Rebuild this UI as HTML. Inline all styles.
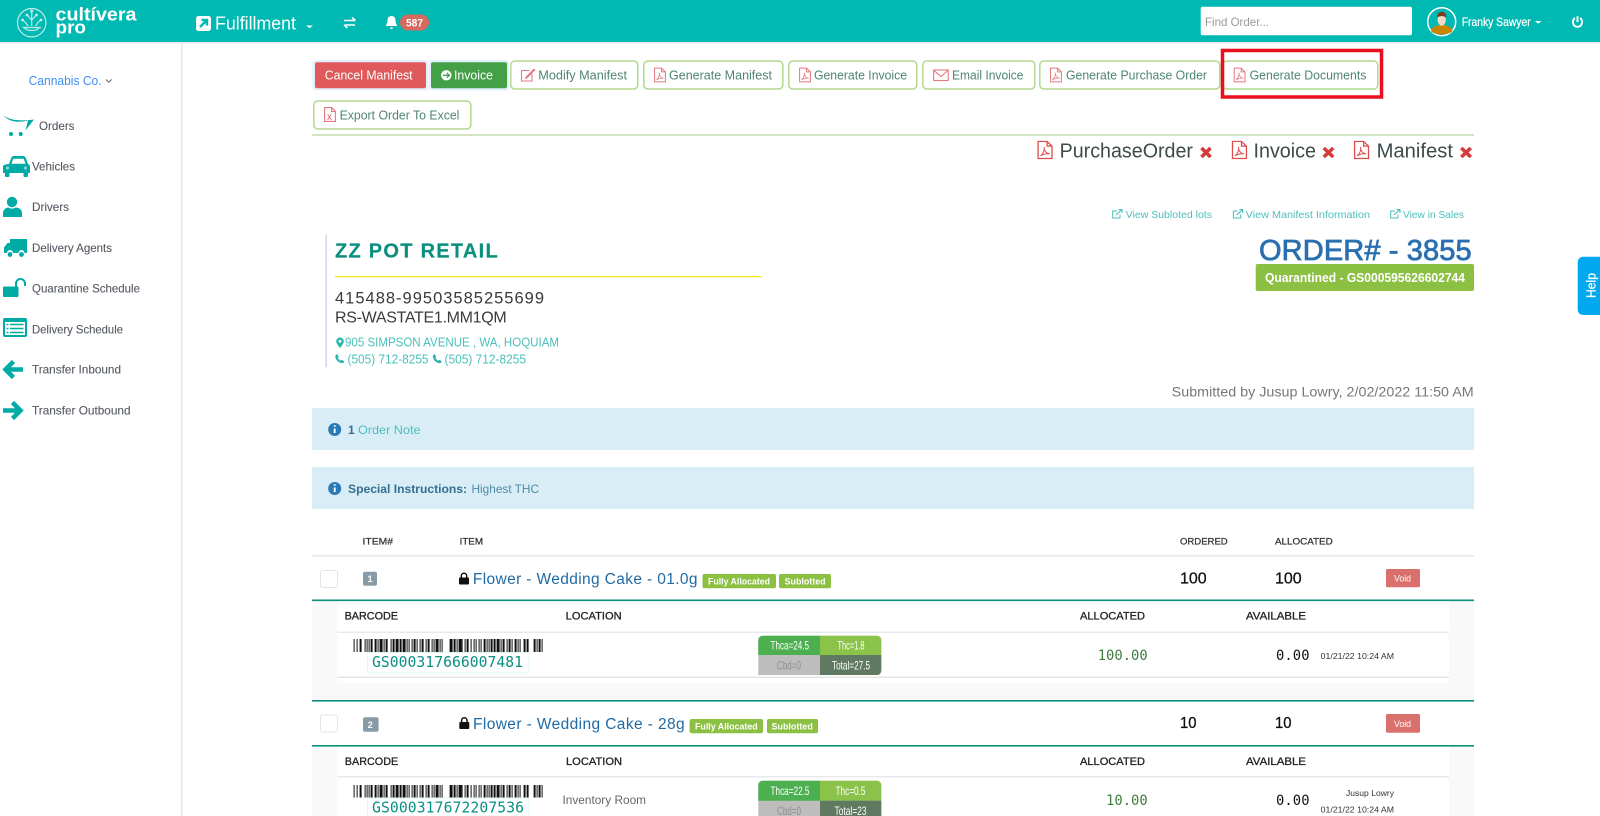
<!DOCTYPE html>
<html lang="en">
<head>
<meta charset="utf-8">
<title>Order 3855 - Fulfillment</title>
<style>
html,body{margin:0;padding:0;background:#fff;width:1600px;height:816px;overflow:hidden}
svg{display:block}
text{font-family:"Liberation Sans",Arial,sans-serif}
.m{font-family:"DejaVu Sans Mono","Liberation Mono",monospace}
.btn{font-size:12.5px;fill:#4f8571}
.nav{font-size:12px;fill:#565b63;stroke:#565b63;stroke-width:.12px}
.th{font-size:9.5px;fill:#333;stroke:#333;stroke-width:.25px}
.sh{font-size:11px;fill:#222;stroke:#222;stroke-width:.3px}
.lb{font-size:9.5px;fill:#fff;font-weight:bold}
.ti{font-size:15.5px;fill:#1f6aa5}
.qt{font-size:15.5px;fill:#111;stroke:#111;stroke-width:.3px}
.gr{font-size:12px;fill:#fff}
.gy{font-size:12px;fill:#8f8f8f}
.lk{font-size:10.5px;fill:#4bbfbb}
.ad{font-size:12.5px;fill:#4bbfbb}
.doc{font-size:20px;fill:#3d4b4b}
.ico{fill:none;stroke:#e6777c;stroke-width:1.1}
.tl{fill:#00aaa5}
</style>
</head>
<body>
<svg xmlns="http://www.w3.org/2000/svg" width="1600" height="816" viewBox="0 0 1600 816">
<defs>
<symbol id="pdf" viewBox="0 0 12 15" preserveAspectRatio="none" overflow="visible">
<path d="M.6.6H7.6L11.4 4.4V14.4H.6Z M7.6.6V4.4H11.4" fill="none" stroke="currentColor" stroke-width="1"/>
<path d="M2.5 12.3C4.500 10.800 5.800 7.800 5.300 5.200C5 7.800 7 10.400 9.600 10.700C7.400 10.400 4.600 11 2.500 12.300Z" fill="none" stroke="currentColor" stroke-width=".8"/>
</symbol>
<symbol id="bars" viewBox="0 0 190 13" preserveAspectRatio="none" overflow="visible">
<path stroke="#111" stroke-width="1" d="M.5 0v13M3.5 0v13M11.5 0v13M13.5 0v13M15.5 0v13M24.5 0v13M30.5 0v13M37.5 0v13M53.5 0v13M55.5 0v13M58.5 0v13M63.5 0v13M66.5 0v13M72.5 0v13M78.5 0v13M80.5 0v13M86.5 0v13M88.5 0v13M103.5 0v13M108.5 0v13M111.5 0v13M117.5 0v13M120.5 0v13M122.5 0v13M125.5 0v13M127.5 0v13M133.5 0v13M135.5 0v13M147.5 0v13M153.5 0v13M158.5 0v13M164.5 0v13M166.5 0v13M183.5 0v13M188.5 0v13"/>
<path stroke="#111" stroke-width="2" d="M7 0v13M18 0v13M22 0v13M33 0v13M40 0v13M47 0v13M61 0v13M69 0v13M75 0v13M101 0v13M114 0v13M131 0v13M138 0v13M141 0v13M150 0v13M156 0v13M162 0v13M171 0v13M174 0v13M181 0v13M186 0v13"/>
<path stroke="#111" stroke-width="3" d="M27.5 0v13M43.5 0v13M50.5 0v13M83.5 0v13M97.5 0v13M106.5 0v13M144.5 0v13"/>
</symbol>
<symbol id="ext" viewBox="0 0 11 10" overflow="visible">
<path d="M8 5.500V9H.7V2H5" fill="none" stroke="currentColor" stroke-width="1"/>
<path d="M4 6L9.500 .8M6.500.5H10V4" fill="none" stroke="currentColor" stroke-width="1.100"/>
</symbol>
<symbol id="ph" viewBox="0 0 10 10" overflow="visible">
<path d="M2.400.3L4 2.800 3 4C3.600 5.400 4.600 6.400 6 7L7.200 6 9.700 7.600C9.500 8.900 8.400 9.800 7.200 9.700 3.600 9.200.8 6.400.3 2.800.2 1.600 1.100.5 2.400.3Z" fill="currentColor"/>
</symbol>
<symbol id="lock" viewBox="0 0 10 12" overflow="visible">
<path d="M2.300 5.400V3.400C2.300 1.800 3.500.8 5 .8S7.700 1.800 7.700 3.400V5.400" fill="none" stroke="#111" stroke-width="1.500"/>
<rect x="0" y="5" width="10" height="7" rx="1" fill="#111"/>
</symbol>
</defs>

<!-- top bar -->
<rect width="1600" height="42" fill="#00b9b3"/>
<rect y="42" width="1600" height="1.500" fill="#e3e8ec"/>
<g fill="none" stroke="#bfeeea" stroke-width="1.200">
<circle cx="31.700" cy="22.700" r="14.200"/>
<path d="M22.500 27.500H41M24.500 27.500C25.500 31.500 38 31.500 39 27.500"/>
<path d="M31.700 26V11M31.700 20L27.500 15.500M31.700 20L36 15.500M28 26C26 23 25 21.500 23 20.500M35.500 26C37.500 23 38.500 21.500 40.500 20.500"/>
</g>
<g fill="#bfeeea"><circle cx="31.700" cy="11" r="1.500"/><circle cx="27" cy="15" r="1.400"/><circle cx="36.500" cy="15" r="1.400"/><circle cx="22.500" cy="20" r="1.400"/><circle cx="41" cy="20" r="1.400"/></g>
<text x="55.500" y="20.500" font-size="18" font-weight="bold" fill="#fff" textLength="81" lengthAdjust="spacingAndGlyphs">cultívera</text>
<text x="55.500" y="33.500" font-size="18" font-weight="bold" fill="#fff" textLength="30.500" lengthAdjust="spacingAndGlyphs">pro</text>
<rect x="196" y="16" width="15" height="15" rx="2.500" fill="#fff"/>
<path d="M200 27L206.500 20.500M201.500 20H207V25.500" stroke="#00b9b3" stroke-width="2.400" fill="none"/>
<text x="215" y="29.500" font-size="18.500" fill="#fff" textLength="81" lengthAdjust="spacingAndGlyphs">Fulfillment</text>
<path d="M306 25.500h7l-3.500 2.600z" fill="#fff"/>
<path d="M344 20.500H355M352 17.500L355.500 20.500M355 25H344.500M347.500 28L344 25" stroke="#fff" stroke-width="1.600" fill="none"/>
<path d="M391.500 16c-3 0-4 2-4 4.500 0 3-1.500 4-1.500 5.500h11c0-1.500-1.500-2.500-1.500-5.500 0-2.500-1-4.500-4-4.500z" fill="#fff"/>
<path d="M390 27.500h3a1.500 1.500 0 0 1-3 0z" fill="#fff"/>
<rect x="400" y="14.500" width="29" height="16" rx="8" fill="#d9695f"/>
<text x="406" y="26.300" font-size="11" font-weight="bold" fill="#fff" textLength="17" lengthAdjust="spacingAndGlyphs">587</text>

<rect x="1200.700" y="6.700" width="211.300" height="28.600" rx="2" fill="#fff"/>
<text x="1205" y="26" font-size="12" fill="#9a9a9a" textLength="64" lengthAdjust="spacingAndGlyphs">Find Order...</text>
<circle cx="1441.700" cy="21.700" r="14" fill="#00b9b3" stroke="#fff" stroke-width="1.500"/>
<path d="M1431 31C1432 26.500 1437 25 1441.700 25S1451.500 26.500 1452.500 31C1449 35.500 1434 35.500 1431 31Z" fill="#c98500"/>
<ellipse cx="1441.700" cy="19.500" rx="4.200" ry="6.200" fill="#f2d9c4"/>
<path d="M1437.300 18C1437 13.500 1439 11.800 1441.700 11.800S1446.500 13.500 1446.100 18C1445 15.500 1438.500 15.500 1437.300 18Z" fill="#7a3f22"/>
<text x="1461.700" y="26" font-size="12" fill="#fff" stroke="#fff" stroke-width=".25" textLength="69" lengthAdjust="spacingAndGlyphs">Franky Sawyer</text>
<path d="M1535 21h6.500l-3.250 2.800z" fill="#fff"/>
<path d="M1574.800 18C1571.800 20.500 1572.500 26.800 1577.500 26.800S1583.200 20.500 1580.200 18M1577.500 16.300V22" fill="none" stroke="#fff" stroke-width="1.900"/>

<!-- sidebar -->
<rect x="181" y="43" width="1.500" height="773" fill="#e4e9ee"/>
<text x="28.600" y="85" font-size="12.500" fill="#3f8ff0" textLength="73" lengthAdjust="spacingAndGlyphs">Cannabis Co.</text>
<path d="M106 79.500L108.800 82.300 111.600 79.500" fill="none" stroke="#555" stroke-width=".9"/>

<path class="tl" d="M3 115C10 121 22 121 34 119.500L25.500 130.500 28 120.500C18 123 9 122 3 115Z"/>
<circle class="tl" cx="11" cy="134" r="2"/><circle class="tl" cx="20.700" cy="134" r="2"/>
<text class="nav" x="39" y="130" textLength="35.500" lengthAdjust="spacingAndGlyphs">Orders</text>

<path class="tl" d="M9 164L11 158.500C11.500 157 12.500 156 14 156H23C24.500 156 25.500 157 26 158.500L28 164C29.500 164.500 30 165.500 30 167V173H28V176C28 177.500 23.500 177.500 23.500 176V173H9.500V176C9.500 177.500 5 177.500 5 176V173H3V167C3 165.500 3.500 164.500 9 164Z"/>
<path d="M11.500 163.800L13.300 158.800H23.700L25.500 163.800Z" fill="#fff"/>
<circle cx="7.500" cy="168" r="1.600" fill="#fff" opacity=".5"/><circle cx="25.500" cy="168" r="1.600" fill="#fff" opacity=".5"/>
<text class="nav" x="32" y="170.300" textLength="43" lengthAdjust="spacingAndGlyphs">Vehicles</text>

<circle class="tl" cx="12" cy="202" r="5.200"/>
<path class="tl" d="M3 217V213C3 209.500 6 207.500 8.500 207.500 10.500 209 13.500 209 15.500 207.500 19 207.500 22 209.500 22 213V217Z"/>
<text class="nav" x="32" y="211" textLength="37" lengthAdjust="spacingAndGlyphs">Drivers</text>

<path class="tl" d="M10 239H27V253H24.500A3 3 0 0 0 18.500 253H13A3 3 0 0 0 7 253H4V247.500L7.500 243H10Z"/>
<circle class="tl" cx="10" cy="254.500" r="2.400"/><circle class="tl" cx="21.500" cy="254.500" r="2.400"/>
<text class="nav" x="32" y="252" textLength="80" lengthAdjust="spacingAndGlyphs">Delivery Agents</text>

<rect class="tl" x="3" y="286.500" width="15.500" height="10.500" rx="1"/>
<path d="M16 287V283.500A4.500 4.500 0 0 1 25 283.500V286" fill="none" stroke="#00aaa5" stroke-width="2"/>
<text class="nav" x="32" y="292.500" textLength="108" lengthAdjust="spacingAndGlyphs">Quarantine Schedule</text>

<rect class="tl" x="3" y="318" width="24" height="19" rx="2"/>
<rect x="5" y="322" width="20" height="13" fill="#fff"/>
<path d="M6.500 324.500h2M10 324.500h13.500M6.500 328.500h2M10 328.500h13.500M6.500 332.500h2M10 332.500h13.500" stroke="#00aaa5" stroke-width="1.500"/>
<text class="nav" x="32" y="333.300" textLength="91" lengthAdjust="spacingAndGlyphs">Delivery Schedule</text>

<path d="M23 369.500H7M13.500 361.500L5.500 369.500 13.500 377.500" fill="none" stroke="#00aaa5" stroke-width="4.500"/>
<text class="nav" x="32" y="373.500" textLength="89" lengthAdjust="spacingAndGlyphs">Transfer Inbound</text>

<path d="M3 410.500H19M12.500 402.500L20.500 410.500 12.500 418.500" fill="none" stroke="#00aaa5" stroke-width="4.500"/>
<text class="nav" x="32" y="414.500" textLength="98.500" lengthAdjust="spacingAndGlyphs">Transfer Outbound</text>

<!-- action buttons -->
<rect x="312.500" y="60" width="116" height="30.500" rx="3" fill="#e3f1fb"/>
<rect x="315" y="62.300" width="111" height="26" rx="2" fill="#e05a5c"/>
<text x="324.800" y="79.700" font-size="13" fill="#fff" textLength="87.800" lengthAdjust="spacingAndGlyphs">Cancel Manifest</text>
<rect x="429" y="60" width="80" height="30.500" rx="3" fill="#e3f1fb"/>
<rect x="431" y="62.300" width="76" height="26" rx="2" fill="#43a047"/>
<circle cx="446.300" cy="75.300" r="5.200" fill="#fff"/>
<path d="M443 75.300H449M446.800 72.800L449.300 75.300 446.800 77.800" fill="none" stroke="#43a047" stroke-width="1.300"/>
<text x="454" y="79.700" font-size="13" fill="#fff" textLength="39" lengthAdjust="spacingAndGlyphs">Invoice</text>

<g fill="#fff" stroke="#b4d88e" stroke-width="1.500">
<rect x="510.800" y="61" width="127" height="28" rx="4"/>
<rect x="643.800" y="61" width="139" height="28" rx="4"/>
<rect x="788.800" y="61" width="128" height="28" rx="4"/>
<rect x="922.800" y="61" width="112" height="28" rx="4"/>
<rect x="1039.800" y="61" width="180" height="28" rx="4"/>
<rect x="1222.800" y="61" width="155" height="28" rx="4"/>
<rect x="313.800" y="101" width="157" height="28" rx="4"/>
</g>
<path class="ico" d="M529.500 70.500H521.500V81H532V74"/>
<path d="M525.500 77L534 68.500 535.500 70 527 78.500 525 79Z" fill="#e6777c"/>
<text class="btn" x="538.300" y="79.500" textLength="88.700" lengthAdjust="spacingAndGlyphs">Modify Manifest</text>
<use href="#pdf" x="654" y="67.500" width="12" height="15" color="#e6777c"/>
<text class="btn" x="669" y="79.500" textLength="103" lengthAdjust="spacingAndGlyphs">Generate Manifest</text>
<use href="#pdf" x="799" y="67.500" width="12" height="15" color="#e6777c"/>
<text class="btn" x="814" y="79.500" textLength="93" lengthAdjust="spacingAndGlyphs">Generate Invoice</text>
<rect class="ico" x="933.700" y="70" width="14.500" height="10.500"/>
<path class="ico" d="M934 70.500L941 76.500 948 70.500"/>
<text class="btn" x="952" y="79.500" textLength="71.500" lengthAdjust="spacingAndGlyphs">Email Invoice</text>
<use href="#pdf" x="1050" y="67.500" width="12" height="15" color="#e6777c"/>
<text class="btn" x="1066" y="79.500" textLength="141" lengthAdjust="spacingAndGlyphs">Generate Purchase Order</text>
<use href="#pdf" x="1233.600" y="67.500" width="12" height="15" color="#e6777c"/>
<text class="btn" x="1249.600" y="79.500" textLength="116.800" lengthAdjust="spacingAndGlyphs">Generate Documents</text>
<path class="ico" d="M324.600 107.600H331.600L335.400 111.400V121.400H324.600Z M331.600 107.600V111.400H335.400"/>
<text x="327" y="120" font-size="10" fill="#e0555a">x</text>
<text class="btn" x="339.600" y="119.500" textLength="119.800" lengthAdjust="spacingAndGlyphs">Export Order To Excel</text>

<rect x="1222.500" y="50.500" width="159" height="46.500" fill="none" stroke="#ea0f1e" stroke-width="3.500"/>

<rect x="312" y="134" width="1162" height="2" fill="#d3e5c3"/>

<!-- generated documents -->
<use href="#pdf" x="1037.300" y="140.700" width="15.500" height="18.500" color="#dd4b4b"/>
<text class="doc" x="1059.600" y="157.300" textLength="133.400" lengthAdjust="spacingAndGlyphs">PurchaseOrder</text>
<path d="M1201.500 148L1210.500 157M1210.500 148L1201.500 157" stroke="#d63b3b" stroke-width="3.600"/>
<use href="#pdf" x="1231.700" y="140.700" width="15.500" height="18.500" color="#dd4b4b"/>
<text class="doc" x="1253.500" y="157.300" textLength="62.500" lengthAdjust="spacingAndGlyphs">Invoice</text>
<path d="M1323.800 148L1333.200 157M1333.200 148L1323.800 157" stroke="#d63b3b" stroke-width="3.600"/>
<use href="#pdf" x="1353.800" y="140.700" width="15.500" height="18.500" color="#dd4b4b"/>
<text class="doc" x="1376.600" y="157.300" textLength="76.400" lengthAdjust="spacingAndGlyphs">Manifest</text>
<path d="M1461.300 148L1470.800 157M1470.800 148L1461.300 157" stroke="#d63b3b" stroke-width="3.600"/>

<!-- view links -->
<use href="#ext" x="1112" y="209" width="11" height="10" color="#4bbfbb"/>
<text class="lk" x="1125.700" y="218" textLength="86.300" lengthAdjust="spacingAndGlyphs">View Subloted lots</text>
<use href="#ext" x="1232.700" y="209" width="11" height="10" color="#4bbfbb"/>
<text class="lk" x="1245.700" y="218" textLength="124.300" lengthAdjust="spacingAndGlyphs">View Manifest Information</text>
<use href="#ext" x="1390" y="209" width="11" height="10" color="#4bbfbb"/>
<text class="lk" x="1403" y="218" textLength="61" lengthAdjust="spacingAndGlyphs">View in Sales</text>

<!-- customer -->
<rect x="325.500" y="235" width="1.300" height="132" fill="#c5cfe8"/>
<text x="335" y="257.300" font-size="20" font-weight="bold" fill="#0a8f7f" stroke="#0a8f7f" stroke-width=".2" textLength="162.700">ZZ POT RETAIL</text>
<rect x="335" y="276" width="426.700" height="1.300" fill="#f8e71c"/>
<text x="335" y="303.300" font-size="16.500" fill="#3a3a3a" textLength="209">415488-99503585255699</text>
<text x="335" y="322.700" font-size="16" fill="#3a3a3a" textLength="171.700">RS-WASTATE1.MM1QM</text>
<path d="M340 337.500A3.800 3.800 0 0 0 336.200 341.300C336.200 344 340 348 340 348S343.800 344 343.800 341.300A3.800 3.800 0 0 0 340 337.500Z" fill="#2ab5ae"/>
<circle cx="340" cy="341.300" r="1.400" fill="#fff"/>
<text class="ad" x="345" y="346.700" textLength="214" lengthAdjust="spacingAndGlyphs">905 SIMPSON AVENUE , WA, HOQUIAM</text>
<use href="#ph" x="335" y="354" width="9.500" height="9.500" color="#2ab5ae"/>
<text class="ad" x="347.500" y="363.300" textLength="81" lengthAdjust="spacingAndGlyphs">(505) 712-8255</text>
<use href="#ph" x="432.500" y="354" width="9.500" height="9.500" color="#2ab5ae"/>
<text class="ad" x="444.500" y="363.300" textLength="81.500" lengthAdjust="spacingAndGlyphs">(505) 712-8255</text>

<!-- order -->
<text x="1259" y="260" font-size="29" fill="#2a6fb0" stroke="#2a6fb0" stroke-width=".8" textLength="212.700">ORDER# - 3855</text>
<rect x="1255.700" y="264" width="218.300" height="27" rx="2" fill="#8bc043"/>
<text x="1265" y="282" font-size="12.500" font-weight="bold" fill="#fff" textLength="200" lengthAdjust="spacingAndGlyphs">Quarantined - GS000595626602744</text>
<text x="1171.700" y="396.500" font-size="14" fill="#777" textLength="302" lengthAdjust="spacingAndGlyphs">Submitted by Jusup Lowry, 2/02/2022 11:50 AM</text>

<!-- help -->
<path d="M1600 256.700H1584Q1577.700 256.700 1577.700 263V309Q1577.700 315 1584 315H1600Z" fill="#00a8f0"/>
<text transform="translate(1595.500 298) rotate(-90)" font-size="12.500" fill="#fff" stroke="#fff" stroke-width=".3" textLength="25" lengthAdjust="spacingAndGlyphs">Help</text>

<!-- alerts -->
<rect x="312" y="408" width="1162" height="42" fill="#d9edf7"/>
<circle cx="334.700" cy="429.500" r="6.500" fill="#2a7ab5"/>
<path d="M334.700 428.500v4.500M334.700 425.200v1.600" stroke="#fff" stroke-width="1.900"/>
<text x="348" y="434" font-size="12" font-weight="bold" fill="#31708f">1</text>
<text x="358" y="434" font-size="12" fill="#4bbfbb" textLength="62.500" lengthAdjust="spacingAndGlyphs">Order Note</text>
<rect x="312" y="467" width="1162" height="42" fill="#d9edf7"/>
<circle cx="334.700" cy="488.500" r="6.500" fill="#2a7ab5"/>
<path d="M334.700 487.500v4.500M334.700 484.200v1.600" stroke="#fff" stroke-width="1.900"/>
<text x="348" y="493" font-size="12" font-weight="bold" fill="#31708f" textLength="119" lengthAdjust="spacingAndGlyphs">Special Instructions:</text>
<text x="471.500" y="493" font-size="12" fill="#4f8aa5" textLength="67.500" lengthAdjust="spacingAndGlyphs">Highest THC</text>

<!-- table head -->
<text class="th" x="362.500" y="544.300" textLength="30.500" lengthAdjust="spacingAndGlyphs">ITEM#</text>
<text class="th" x="459.600" y="544.300" textLength="23.400" lengthAdjust="spacingAndGlyphs">ITEM</text>
<text class="th" x="1180" y="544.300" textLength="47.700" lengthAdjust="spacingAndGlyphs">ORDERED</text>
<text class="th" x="1275" y="544.300" textLength="57.700" lengthAdjust="spacingAndGlyphs">ALLOCATED</text>
<rect x="312" y="555" width="1162" height="1.600" fill="#e6eaed"/>

<!-- row 1 -->
<rect x="320.500" y="570.500" width="17" height="17" rx="2" fill="#fff" stroke="#e2e6e9"/>
<rect x="363" y="571.700" width="14" height="14" rx="2" fill="#8a9ba8"/>
<text x="367.500" y="582" font-size="9" font-weight="bold" fill="#fff">1</text>
<use href="#lock" x="459" y="572.500" width="10" height="12"/>
<text class="ti" x="472.900" y="584" textLength="224.600">Flower - Wedding Cake - 01.0g</text>
<rect x="702.500" y="574" width="73.500" height="14.300" rx="2" fill="#8bc043"/>
<text class="lb" x="708" y="584.500" textLength="62" lengthAdjust="spacingAndGlyphs">Fully Allocated</text>
<rect x="779" y="574" width="52" height="14.300" rx="2" fill="#8bc043"/>
<text class="lb" x="784.600" y="584.500" textLength="41" lengthAdjust="spacingAndGlyphs">Sublotted</text>
<text class="qt" x="1180" y="583.300" textLength="26.700" lengthAdjust="spacingAndGlyphs">100</text>
<text class="qt" x="1275" y="583.300" textLength="26.700" lengthAdjust="spacingAndGlyphs">100</text>
<rect x="1386" y="569" width="34" height="18.300" rx="1.500" fill="#d9706b"/>
<text x="1394" y="581.500" font-size="9.500" fill="#fff" textLength="17" lengthAdjust="spacingAndGlyphs">Void</text>
<rect x="312" y="601" width="1162" height="99" fill="#f9f9f9"/>
<rect x="337.500" y="601" width="1111.500" height="82" fill="#fff"/>
<rect x="312" y="599.500" width="1162" height="1.600" fill="#0a8f7f"/>
<text class="sh" x="344.600" y="619.700" textLength="53.400" lengthAdjust="spacingAndGlyphs">BARCODE</text>
<text class="sh" x="565.700" y="619.700" textLength="56" lengthAdjust="spacingAndGlyphs">LOCATION</text>
<text class="sh" x="1080" y="619.700" textLength="65" lengthAdjust="spacingAndGlyphs">ALLOCATED</text>
<text class="sh" x="1246" y="619.700" textLength="60" lengthAdjust="spacingAndGlyphs">AVAILABLE</text>
<rect x="337.500" y="631.600" width="1111.500" height="1.400" fill="#e6eaed"/>
<use href="#bars" x="353.600" y="639" width="190" height="13"/>
<rect x="367.500" y="652.500" width="161.500" height="20.500" rx="2" fill="#fff" stroke="#dff5f4"/>
<text class="m" x="372" y="667" font-size="14.700" fill="#0a8f85" textLength="151">GS000317666007481</text>
<path d="M758.300 675V640.500Q758.300 635.700 763 635.700H876.500Q881.300 635.700 881.300 640.500V670Q881.300 675 876.500 675Z" fill="#bdbdbd"/>
<path d="M758.300 655V640.500Q758.300 635.700 763 635.700H820V655Z" fill="#4caf50"/>
<path d="M820 655V635.700H876.500Q881.300 635.700 881.300 640.500V655Z" fill="#8bc34a"/>
<path d="M820 655H881.300V670Q881.300 675 876.500 675H820Z" fill="#5f7a61"/>
<text class="gr" x="770.500" y="649.500" textLength="38.500" lengthAdjust="spacingAndGlyphs">Thca=24.5</text>
<text class="gr" x="837.500" y="649.500" textLength="27" lengthAdjust="spacingAndGlyphs">Thc=1.8</text>
<text class="gy" x="777" y="669.500" textLength="24" lengthAdjust="spacingAndGlyphs">Cbd=0</text>
<text class="gr" x="832" y="669.500" textLength="38" lengthAdjust="spacingAndGlyphs">Total=27.5</text>
<text class="m" x="1097.700" y="660" font-size="13.800" fill="#3f7d3f" textLength="50">100.00</text>
<text class="m" x="1276" y="660" font-size="13.800" fill="#111" textLength="33.500">0.00</text>
<text x="1320.700" y="658.800" font-size="8.500" fill="#333" textLength="73.300" lengthAdjust="spacingAndGlyphs">01/21/22 10:24 AM</text>
<rect x="337.500" y="676.600" width="1111.500" height="1.400" fill="#e3e3e3"/>

<!-- row 2 -->
<rect x="312" y="700" width="1162" height="1.600" fill="#0a8f7f"/>
<rect x="320.500" y="715" width="17" height="17" rx="2" fill="#fff" stroke="#e2e6e9"/>
<rect x="363" y="717.300" width="15.600" height="14.400" rx="2" fill="#8a9ba8"/>
<text x="367.800" y="727.800" font-size="9" font-weight="bold" fill="#fff">2</text>
<use href="#lock" x="459.300" y="717" width="10" height="12"/>
<text class="ti" x="473" y="729" textLength="211.600">Flower - Wedding Cake - 28g</text>
<rect x="689.600" y="719" width="73.400" height="14.300" rx="2" fill="#8bc043"/>
<text class="lb" x="695" y="729.300" textLength="62.700" lengthAdjust="spacingAndGlyphs">Fully Allocated</text>
<rect x="767" y="719" width="51" height="14.300" rx="2" fill="#8bc043"/>
<text class="lb" x="771.500" y="729.300" textLength="41.300" lengthAdjust="spacingAndGlyphs">Sublotted</text>
<text class="qt" x="1180" y="728" textLength="16.500" lengthAdjust="spacingAndGlyphs">10</text>
<text class="qt" x="1275" y="728" textLength="16.500" lengthAdjust="spacingAndGlyphs">10</text>
<rect x="1386" y="714" width="34" height="18.700" rx="1.500" fill="#d9706b"/>
<text x="1394" y="726.800" font-size="9.500" fill="#fff" textLength="17" lengthAdjust="spacingAndGlyphs">Void</text>
<rect x="312" y="746" width="1162" height="70" fill="#f9f9f9"/>
<rect x="337.500" y="746" width="1111.500" height="70" fill="#fff"/>
<rect x="312" y="745" width="1162" height="1.600" fill="#0a8f7f"/>
<text class="sh" x="344.800" y="765.200" textLength="53.400" lengthAdjust="spacingAndGlyphs">BARCODE</text>
<text class="sh" x="566" y="765.200" textLength="56" lengthAdjust="spacingAndGlyphs">LOCATION</text>
<text class="sh" x="1080" y="765.200" textLength="65" lengthAdjust="spacingAndGlyphs">ALLOCATED</text>
<text class="sh" x="1246" y="765.200" textLength="60" lengthAdjust="spacingAndGlyphs">AVAILABLE</text>
<rect x="337.500" y="776" width="1111.500" height="1.400" fill="#e6eaed"/>
<use href="#bars" x="353.600" y="785" width="190" height="12.500"/>
<rect x="367.500" y="798" width="161.500" height="24" rx="2" fill="#fff" stroke="#dff5f4"/>
<text class="m" x="372" y="812.500" font-size="14.700" fill="#0a8f85" textLength="152">GS000317672207536</text>
<text x="562.500" y="804" font-size="12" fill="#666" textLength="83.500" lengthAdjust="spacingAndGlyphs">Inventory Room</text>
<path d="M758.300 822V785.500Q758.300 780.700 763 780.700H876.500Q881.300 780.700 881.300 785.500V822Z" fill="#bdbdbd"/>
<path d="M758.300 800.700V785.500Q758.300 780.700 763 780.700H820V800.700Z" fill="#4caf50"/>
<path d="M820 800.700V780.700H876.500Q881.300 780.700 881.300 785.500V800.700Z" fill="#8bc34a"/>
<rect x="820" y="800.700" width="61.300" height="21" fill="#5f7a61"/>
<text class="gr" x="770.500" y="795" textLength="39" lengthAdjust="spacingAndGlyphs">Thca=22.5</text>
<text class="gr" x="835.500" y="795" textLength="30" lengthAdjust="spacingAndGlyphs">Thc=0.5</text>
<text class="gy" x="777" y="815" textLength="24" lengthAdjust="spacingAndGlyphs">Cbd=0</text>
<text class="gr" x="834.500" y="815" textLength="32" lengthAdjust="spacingAndGlyphs">Total=23</text>
<text class="m" x="1106" y="805" font-size="13.800" fill="#3f7d3f" textLength="41.700">10.00</text>
<text class="m" x="1276" y="805" font-size="13.800" fill="#111" textLength="33.500">0.00</text>
<text x="1346" y="796" font-size="8.500" fill="#333" textLength="48" lengthAdjust="spacingAndGlyphs">Jusup Lowry</text>
<text x="1320.700" y="812.700" font-size="8.500" fill="#333" textLength="73.300" lengthAdjust="spacingAndGlyphs">01/21/22 10:24 AM</text>
</svg>
</body>
</html>
